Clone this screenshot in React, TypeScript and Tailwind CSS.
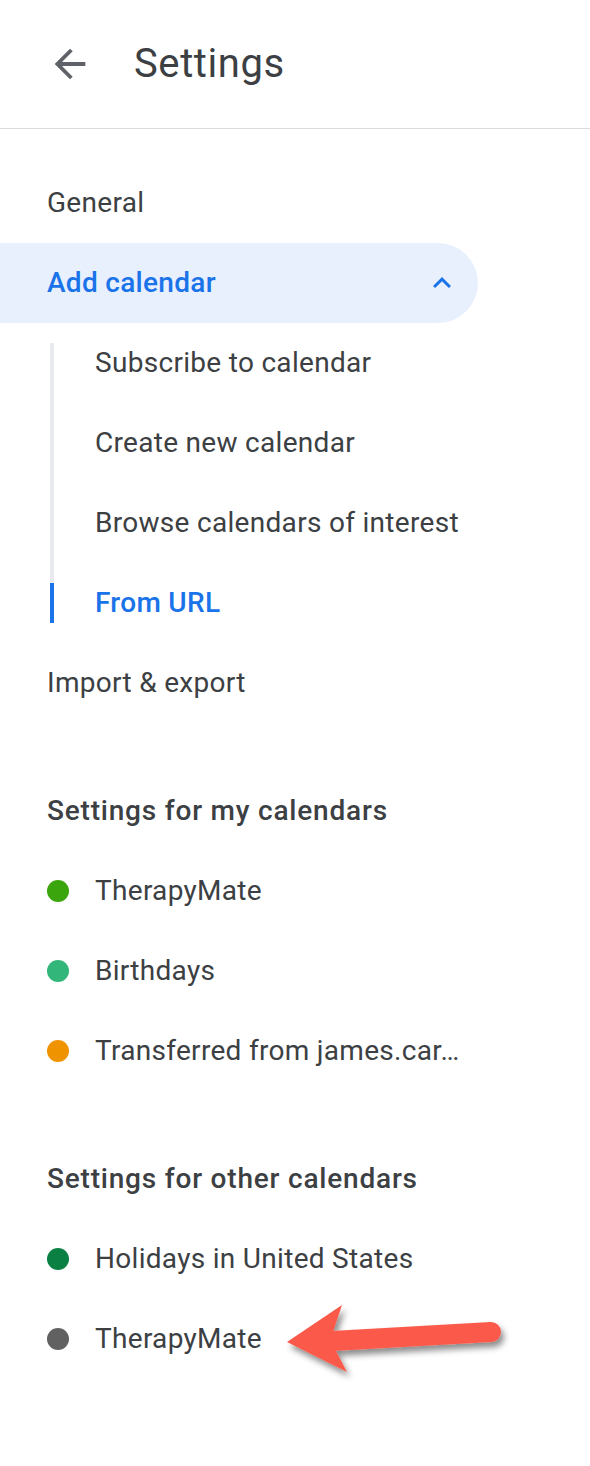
import type { ReactNode } from "react";

const FONT = "font-['Roboto','Liberation_Sans',sans-serif]";

const MY_CALENDARS = [
  { name: "TherapyMate", color: "bg-[#3ba50d]" },
  { name: "Birthdays", color: "bg-[#33b679]" },
  { name: "Transferred from james.car…", color: "bg-[#f09300]" },
];

const OTHER_CALENDARS = [
  { name: "Holidays in United States", color: "bg-[#0b8043]" },
  { name: "TherapyMate", color: "bg-[#616161]" },
];

const SUB_ITEMS = ["Subscribe to calendar", "Create new calendar", "Browse calendars of interest", "From URL"];

function Row({ children }: { children: ReactNode }) {
  return (
    <div className="flex h-20 items-center pl-[47px] text-[28px] tracking-[0.3px] text-[#3c4043]">
      {children}
    </div>
  );
}

function CalendarRow({ name, color }: { name: string; color: string }) {
  return (
    <div className="flex h-20 items-center pl-[47px] text-[28px] tracking-[0.3px] text-[#3c4043]">
      <span className={`h-[22px] w-[22px] shrink-0 rounded-full ${color}`} />
      <span className="ml-[26px] whitespace-nowrap">{name}</span>
    </div>
  );
}

function SubItem({ label, index, last }: { label: string; index: number; last: boolean }) {
  const active = last;
  return (
    <div className="flex h-20">
      {/* left rail segment */}
      <div className="flex w-1 flex-col">
        {index === 0 && <div className="h-5" />}
        {active ? (
          <>
            <div className="h-5 bg-[#e8eaed]" />
            <div className="h-10 bg-[#1a73e8]" />
          </>
        ) : (
          <div className="flex-1 bg-[#e8eaed]" />
        )}
      </div>
      <div
        className={`flex items-center pl-[41px] text-[28px] tracking-[0.3px] ${
          active ? "font-medium text-[#1a73e8]" : "text-[#3c4043]"
        }`}
      >
        {label}
      </div>
    </div>
  );
}

function Pointer() {
  return (
    <svg
      className="pointer-events-none absolute left-[270px] top-[1290px]"
      width="240"
      height="100"
      viewBox="0 0 240 100"
    >
      <defs>
        <filter id="sh" x="-20%" y="-30%" width="140%" height="170%">
          <feDropShadow dx="3" dy="5" stdDeviation="3" floodColor="#000" floodOpacity="0.45" />
        </filter>
      </defs>
      <g filter="url(#sh)" fill="#fb5a4b">
        <line x1="62" y1="51" x2="221" y2="42" stroke="#fb5a4b" strokeWidth="20" strokeLinecap="round" />
        <polygon points="17,52 72,15 63,42 66,61 77,82" />
      </g>
    </svg>
  );
}

export default function App() {
  return (
    <div className={`relative min-h-[1466px] w-[590px] bg-white ${FONT}`}>
      {/* header */}
      <div className="flex h-[129px] items-center border-b border-[#dadce0] pl-[47px]">
        <svg width="46" height="46" viewBox="0 0 24 24" fill="#5f6368">
          <path d="M20 11H7.83l5.59-5.59L12 4l-8 8 8 8 1.41-1.41L7.83 13H20v-2z" />
        </svg>
        <h1 className="ml-[41px] text-[40px] tracking-[0.6px] text-[#3c4043]">Settings</h1>
      </div>

      <nav className="pt-[34px]">
        <Row>General</Row>

        <div className="flex h-20 w-[478px] items-center justify-between rounded-r-full bg-[#e8f0fe] pl-[47px] pr-[18px]">
          <span className="text-[28px] font-medium tracking-[0.3px] text-[#1a73e8]">Add calendar</span>
          <svg width="36" height="36" viewBox="0 0 24 24" fill="#1a73e8">
            <path d="M12 8l-6 6 1.41 1.41L12 10.83l4.59 4.58L18 14z" />
          </svg>
        </div>

        <div className="ml-[50px]">
          {SUB_ITEMS.map((label, i) => (
            <SubItem key={label} label={label} index={i} last={i === SUB_ITEMS.length - 1} />
          ))}
        </div>

        <Row>Import &amp; export</Row>

        <div className="mt-12">
          <Row>
            <span className="font-medium tracking-[0.8px]">Settings for my calendars</span>
          </Row>
          {MY_CALENDARS.map((c) => (
            <CalendarRow key={c.name} name={c.name} color={c.color} />
          ))}
        </div>

        <div className="mt-12">
          <Row>
            <span className="font-medium tracking-[0.8px]">Settings for other calendars</span>
          </Row>
          {OTHER_CALENDARS.map((c) => (
            <CalendarRow key={c.name + c.color} name={c.name} color={c.color} />
          ))}
        </div>
      </nav>

      <Pointer />
    </div>
  );
}
